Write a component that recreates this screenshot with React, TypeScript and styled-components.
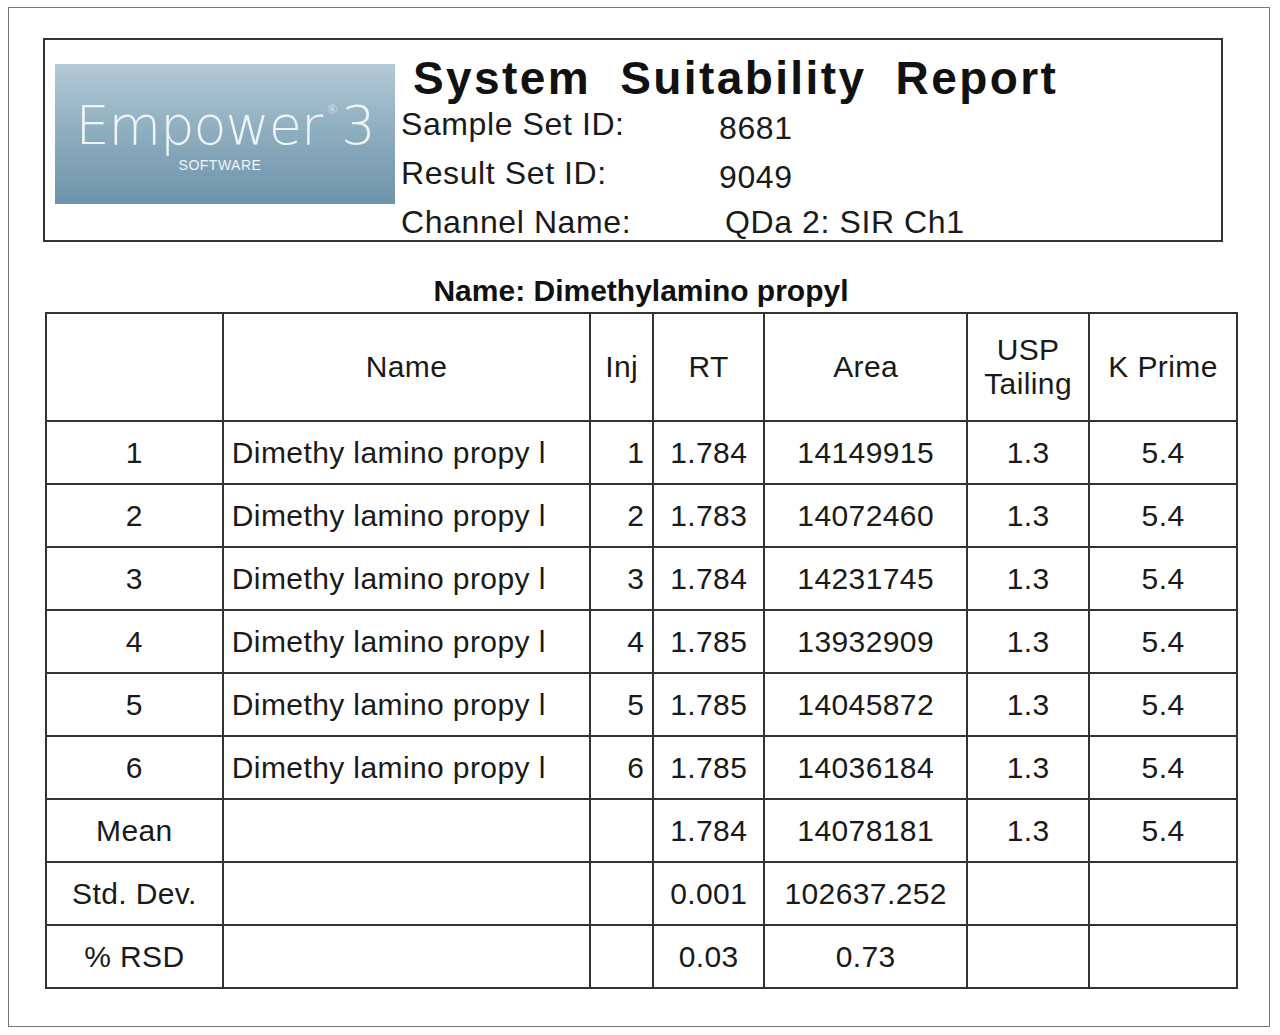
import React from 'react';
import styled, { createGlobalStyle } from 'styled-components';

const Global = createGlobalStyle`
  html, body { margin: 0; background: #fff; }
  body { font-family: "Liberation Sans", Arial, sans-serif; color: #111; }
`;

const Page = styled.div`
  width: 1262px;
  height: 1020px;
  margin: 7px 0 0 8px;
  border: 1.5px solid #777;
  box-sizing: border-box;
  padding: 30px 0 0 34px;
`;

const Header = styled.div`
  width: 1180px;
  height: 204px;
  border: 2px solid #333;
  box-sizing: border-box;
  display: flex;
  padding: 24px 0 0 10px;
  gap: 6px;
`;

const Logo = styled.div`
  width: 340px;
  height: 140px;
  flex-shrink: 0;
  position: relative;
  overflow: hidden;
  background: linear-gradient(180deg, #b3cad6 0%, #90afc1 45%, #6e93aa 100%);
  display: flex;
  flex-direction: column;
  align-items: center;
  justify-content: center;
  color: #eef4f7;
`;

const LogoWord = styled.div`
  font-family: "DejaVu Sans", sans-serif;
  font-weight: 200;
  font-size: 54px;
  letter-spacing: -1px;
  line-height: 1;
  margin-top: 4px;
  sup { font-size: 12px; vertical-align: 30px; margin: 0 4px; }
`;

const LogoSub = styled.div`
  font-size: 14px;
  letter-spacing: 0.5px;
  margin-top: 4px;
  margin-right: 10px;
`;

const Info = styled.div`
  display: flex;
  flex-direction: column;
`;

const Title = styled.div`
  font-weight: bold;
  font-size: 46px;
  line-height: 44px;
  margin: -8px 0 2px 12px;
  letter-spacing: 2.4px;
  word-spacing: 14px;
`;

const InfoRow = styled.div`
  display: grid;
  grid-template-columns: 318px auto;
  font-size: 32px;
  line-height: 45px;
  letter-spacing: 0.6px;
  color: #1a1a1a;
`;

const Value = styled.span<{ $dx?: number }>`
  margin-left: ${p => p.$dx ?? 0}px;
  padding-top: ${p => (p.$dx ? 0 : 4)}px;
`;

const Caption = styled.div`
  width: 1192px;
  margin-top: 30px;
  text-align: center;
  font-weight: bold;
  font-size: 30px;
  line-height: 38px;
  height: 40px;
  padding-left: 2px;
`;

const Table = styled.table`
  width: 1193px;
  margin-left: 2px;
  border-collapse: collapse;
  font-size: 30px;
  letter-spacing: 0.4px;
  color: #1a1a1a;
  td, th { border: 2px solid #333; padding: 0 8px; height: 61px; font-weight: normal; }
  th { height: 106px; }
`;

const Cell = styled.td<{ $align?: string }>`
  text-align: ${p => p.$align ?? 'center'};
`;

const widths = [177, 368, 63, 111, 203, 122, 148];

const rows = [
  ['1', '1', '1.784', '14149915'],
  ['2', '2', '1.783', '14072460'],
  ['3', '3', '1.784', '14231745'],
  ['4', '4', '1.785', '13932909'],
  ['5', '5', '1.785', '14045872'],
  ['6', '6', '1.785', '14036184'],
];

export default function App() {
  return (
    <Page>
      <Global />
      <Header>
        <Logo>
          <LogoWord>Empower<sup>®</sup>3</LogoWord>
          <LogoSub>SOFTWARE</LogoSub>
        </Logo>
        <Info>
          <Title>System Suitability Report</Title>
          <InfoRow><span>Sample Set ID:</span><Value>8681</Value></InfoRow>
          <InfoRow><span>Result Set ID:</span><Value>9049</Value></InfoRow>
          <InfoRow><span>Channel Name:</span><Value $dx={6}>QDa 2: SIR Ch1</Value></InfoRow>
        </Info>
      </Header>
      <Caption>Name: Dimethylamino propyl</Caption>
      <Table>
        <colgroup>{widths.map((w, i) => <col key={i} style={{ width: w }} />)}</colgroup>
        <thead>
          <tr>
            <th></th>
            <th>Name</th>
            <th>Inj</th>
            <th>RT</th>
            <th>Area</th>
            <th>USP<br />Tailing</th>
            <th>K Prime</th>
          </tr>
        </thead>
        <tbody>
          {rows.map(r => (
            <tr key={r[0]}>
              <Cell>{r[0]}</Cell>
              <Cell $align="left">Dimethy lamino propy l</Cell>
              <Cell $align="right">{r[1]}</Cell>
              <Cell>{r[2]}</Cell>
              <Cell>{r[3]}</Cell>
              <Cell>1.3</Cell>
              <Cell>5.4</Cell>
            </tr>
          ))}
          <tr>
            <Cell>Mean</Cell><Cell /><Cell /><Cell>1.784</Cell><Cell>14078181</Cell><Cell>1.3</Cell><Cell>5.4</Cell>
          </tr>
          <tr>
            <Cell>Std. Dev.</Cell><Cell /><Cell /><Cell>0.001</Cell><Cell>102637.252</Cell><Cell /><Cell />
          </tr>
          <tr>
            <Cell>% RSD</Cell><Cell /><Cell /><Cell>0.03</Cell><Cell>0.73</Cell><Cell /><Cell />
          </tr>
        </tbody>
      </Table>
    </Page>
  );
}
